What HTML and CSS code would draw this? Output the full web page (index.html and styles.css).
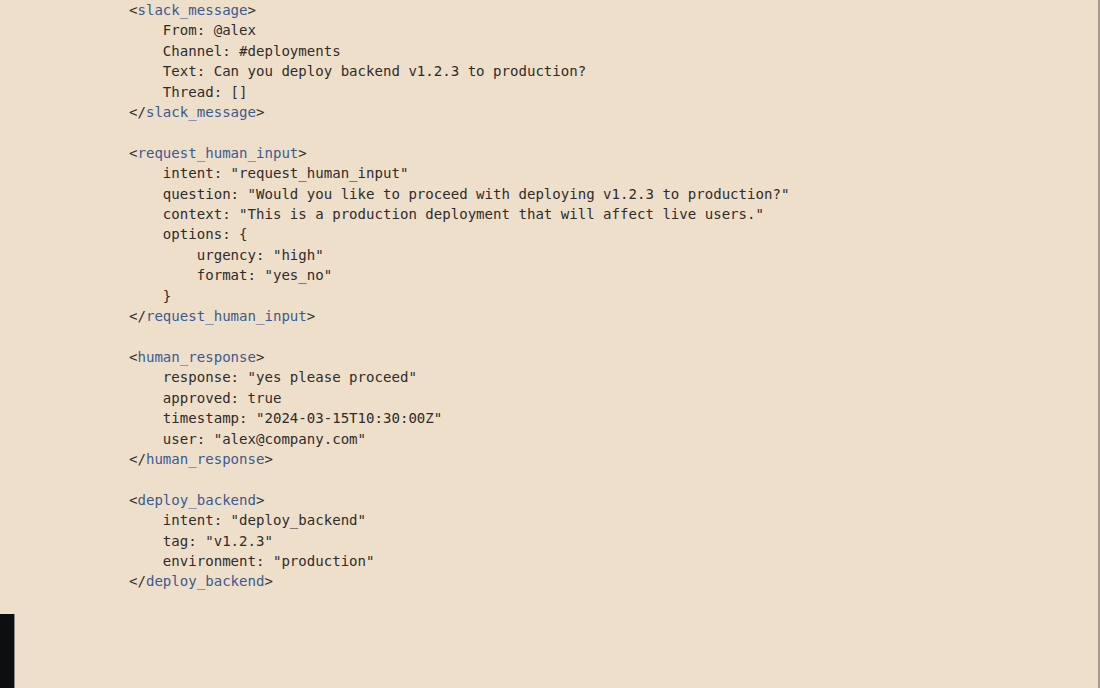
FILE: index.html
```html
<!DOCTYPE html>
<html>
<head>
<meta charset="utf-8">
<link rel="stylesheet" href="styles.css">
</head>
<body>
<div class="screen">
<pre class="code"><span class="b">&lt;</span><span class="t">slack_message</span><span class="b">&gt;</span>
    From: @alex
    Channel: #deployments
    Text: Can you deploy backend v1.2.3 to production?
    Thread: []
<span class="b">&lt;/</span><span class="t">slack_message</span><span class="b">&gt;</span>

<span class="b">&lt;</span><span class="t">request_human_input</span><span class="b">&gt;</span>
    intent: "request_human_input"
    question: "Would you like to proceed with deploying v1.2.3 to production?"
    context: "This is a production deployment that will affect live users."
    options: {
        urgency: "high"
        format: "yes_no"
    }
<span class="b">&lt;/</span><span class="t">request_human_input</span><span class="b">&gt;</span>

<span class="b">&lt;</span><span class="t">human_response</span><span class="b">&gt;</span>
    response: "yes please proceed"
    approved: true
    timestamp: "2024-03-15T10:30:00Z"
    user: "alex@company.com"
<span class="b">&lt;/</span><span class="t">human_response</span><span class="b">&gt;</span>

<span class="b">&lt;</span><span class="t">deploy_backend</span><span class="b">&gt;</span>
    intent: "deploy_backend"
    tag: "v1.2.3"
    environment: "production"
<span class="b">&lt;/</span><span class="t">deploy_backend</span><span class="b">&gt;</span></pre>
<div class="dark-panel"></div>
</div>
</body>
</html>
```

FILE: styles.css
```css
html, body {
  margin: 0;
  padding: 0;
  background: #eedfcb;
}

.screen {
  position: relative;
  height: 688px;
  box-sizing: border-box;
  border-right: 2px solid #a69b8d;
  overflow: hidden;
}

.code {
  margin: 0;
  padding: 0 0 0 129px;
  font-family: "DejaVu Sans Mono", "Liberation Mono", monospace;
  font-size: 14.07px;
  line-height: 20.4px;
  color: #2e2c2a;
}

.code .t {
  color: #3b5b8e;
}

.code .b {
  color: #2e2c2a;
}

.dark-panel {
  position: absolute;
  left: 0;
  top: 614px;
  width: 14px;
  height: 74px;
  background: #0b0f12;
  border-right: 1px solid #8f8a83;
}
```
